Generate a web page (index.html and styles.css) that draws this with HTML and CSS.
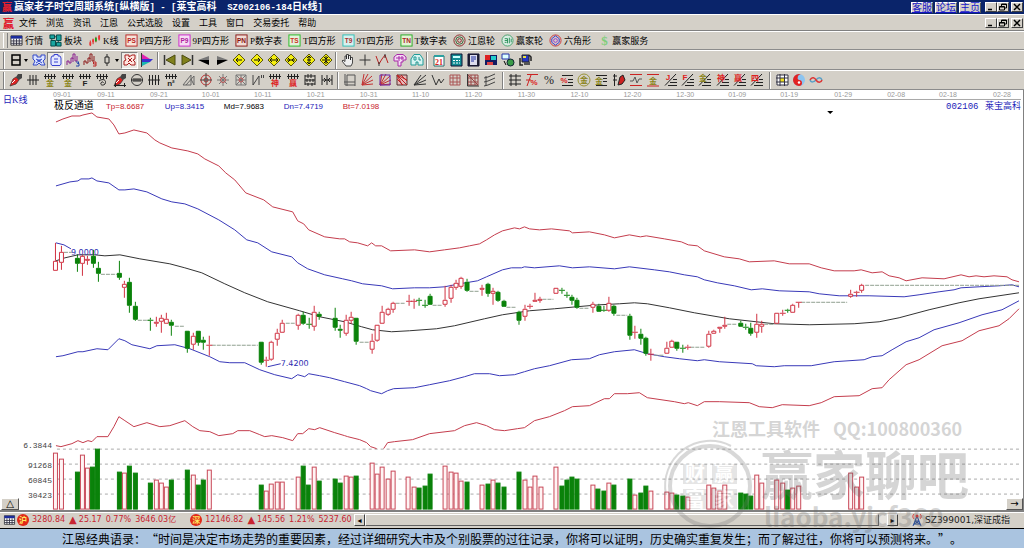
FILE: index.html
```html
<!DOCTYPE html>
<html lang="zh-CN">
<head>
<meta charset="utf-8">
<title>赢家老子时空周期系统</title>
<link rel="stylesheet" href="styles.css">
</head>
<body>
<svg class="sprite" aria-hidden="true">
  <defs>
    <symbol id="comb" viewBox="0 0 14 14"><path d="M1 3.500H13M2.500 1V6M5.500 1V6M8.500 1V6M11.500 1V6" stroke="#222" fill="none"/></symbol>
    <symbol id="diamond" viewBox="0 0 14 14"><path d="M7 1L13 7L7 13L1 7Z" fill="#f4ee10" stroke="#5a5610"/></symbol>
    <symbol id="steps" viewBox="0 0 14 14"><path d="M1 12.500L12 1M4 12.500H13M6 9.500H13M9 6.500H13" stroke="#222" fill="none"/></symbol>
    <symbol id="rays" viewBox="0 0 14 14"><path d="M2 12L4 1M2 12L8 1M2 12L12 3M2 12L13 7M2 12L13 11" stroke="#c23030" fill="none"/></symbol>
    <symbol id="pen" viewBox="0 0 14 14"><path d="M1 13L4 6L7 4L10 7L7 11Z" fill="#d22" stroke="#333" stroke-width=".7"/><path d="M7 4L9 1L13 1V5L10 7Z" fill="#444"/><path d="M3 10L6 7" stroke="#fff"/></symbol>
    <symbol id="min" viewBox="0 0 10 8"><path d="M2 6.500H6" stroke="#000" stroke-width="1.500"/></symbol>
    <symbol id="restore" viewBox="0 0 10 8"><path d="M3.500 3V1H8.500V5H7M1.500 3.500H6.500V7H1.500ZM1.500 4H6.500M3.500 1.500H8.500" stroke="#000" fill="none"/></symbol>
    <symbol id="close" viewBox="0 0 10 8"><path d="M2 1L8 7M8 1L2 7" stroke="#000" stroke-width="1.500"/></symbol>
    <symbol id="table" viewBox="0 0 14 14"><path d="M1 2H13V12H1Z" fill="#fff" stroke="#333"/><path d="M1 2H13V5H1Z" fill="#1c2c9c"/><path d="M1 7.500H13M1 10H13M4 5V12M7 5V12M10 5V12" stroke="#334" fill="none"/></symbol>
  </defs>
</svg>

<div class="app">
  <header class="titlebar">
    <span class="logo">赢</span>
    <h1 class="title">赢家老子时空周期系统<span>[</span>纵横版<span>] - [</span>莱宝高科<span>&nbsp; SZ002106-184</span>日<span>K</span>线<span>]</span></h1>
    <nav class="quick"><a href="#service">客服</a><a href="#forum">论坛</a><a href="#home">主页</a></nav>
    <div class="winbtns">
      <button aria-label="最小化"><svg><use href="#min"/></svg></button><button aria-label="还原"><svg><use href="#restore"/></svg></button><button class="last" aria-label="关闭"><svg><use href="#close"/></svg></button>
    </div>
  </header>

  <div class="menubar">
    <span class="logo">赢</span>
    <nav class="menus">
      <button>文件</button><button>浏览</button><button>资讯</button><button>江恩</button><button>公式选股</button><button>设置</button><button>工具</button><button>窗口</button><button>交易委托</button><button>帮助</button>
    </nav>
    <div class="winbtns">
      <button aria-label="子窗口最小化"><svg><use href="#min"/></svg></button><button aria-label="子窗口还原"><svg><use href="#restore"/></svg></button><button class="last" aria-label="子窗口关闭"><svg><use href="#close"/></svg></button>
    </div>
  </div>

  <div class="toolbar modules">
    <button><svg viewBox="0 0 14 14"><use href="#table"/></svg>行情</button>
    <button><svg viewBox="0 0 14 14"><g stroke="#044" fill="#19a5a0"><path d="M1 1H6V5H1ZM8 1H13V7H8ZM2 7H7V13H2ZM8 9H13V13H8Z"/><path d="M3 5V7M10 7V9M6 3H8" fill="none"/></g></svg>板块</button>
    <button><svg viewBox="0 0 14 14"><path d="M2.500 7V13M5.500 5V11M8.500 3V9M12 1V7" stroke="#c22"/><path d="M1.500 9H3.500V12H1.500ZM11 2H13V6H11ZM4.500 6H6.500V9H4.500Z" fill="#e33"/><path d="M7.500 4H9.500V8H7.500Z" fill="#19a019"/></svg>K线</button>
    <button><svg viewBox="0 0 14 14"><rect x="1" y="1" width="12" height="12" fill="#f6e4da" stroke="#b22"/><text x="7" y="10" class="tag" fill="#b22">PS</text></svg>P四方形</button>
    <button><svg viewBox="0 0 14 14"><rect x="1" y="1" width="12" height="12" fill="#f6dcf4" stroke="#c2c"/><text x="7" y="10" class="tag" fill="#b0209c">P9</text></svg>9P四方形</button>
    <button><svg viewBox="0 0 14 14"><rect x="1" y="1" width="12" height="12" fill="#f1ddd5" stroke="#811"/><text x="7" y="10" class="tag" fill="#811">PN</text></svg>P数字表</button>
    <button><svg viewBox="0 0 14 14"><rect x="1" y="1" width="12" height="12" fill="#e4f2dd" stroke="#2b2"/><text x="7" y="10" class="tag" fill="#c32">TS</text></svg>T四方形</button>
    <button><svg viewBox="0 0 14 14"><rect x="1" y="1" width="12" height="12" fill="#d8f0ee" stroke="#2cc0b8"/><text x="7" y="10" class="tag" fill="#a33">T9</text></svg>9T四方形</button>
    <button><svg viewBox="0 0 14 14"><rect x="1" y="1" width="12" height="12" fill="#e4f2d5" stroke="#2a2"/><text x="7" y="10" class="tag" fill="#a22">TN</text></svg>T数字表</button>
    <button><svg viewBox="0 0 14 14"><g fill="none"><circle cx="7" cy="7" r="6" stroke="#822"/><circle cx="7" cy="7" r="4" stroke="#363"/><circle cx="7" cy="7" r="2" stroke="#822"/></g></svg>江恩轮</button>
    <button><svg viewBox="0 0 14 14"><circle cx="7" cy="7" r="6" fill="#d8ece2" stroke="#47a06c"/><path d="M4 5H7V10M4 7H7M4 9L6 9M9 4V10M11 5V9" stroke="#289058" fill="none"/></svg>赢家轮</button>
    <button><svg viewBox="0 0 14 14"><g fill="none"><circle cx="7" cy="7" r="6" stroke="#c33"/><path d="M3 5L7 2L11 5V9L7 12L3 9Z" stroke="#33c"/><circle cx="7" cy="7" r="2" stroke="#93c"/></g></svg>六角形</button>
    <button><svg viewBox="0 0 14 14"><text x="8" y="12" text-anchor="middle" font-size="14" font-weight="700" fill="#7fce7a">$</text></svg>赢家服务</button>
  </div>

  <div class="toolbar">
    <div class="group period">
      <button class="drop" aria-label="日线"><svg viewBox="0 0 14 14"><path d="M3 2H11V12H3ZM3 7H11" fill="none" stroke="#000" stroke-width="1.500"/></svg><i></i></button>
      <button aria-label="叠加"><svg viewBox="0 0 14 14"><path d="M1 2H5V4H9V2H13V6L11 8L13 12H9L7 10L5 12H1L3 8L1 6ZM4 6L10 10M10 6L4 10M5 7H9" fill="#dce4ff" stroke="#3348c8"/></svg></button>
      <button class="pressed" aria-label="除权"><svg viewBox="0 0 14 14"><path d="M3 3H5V1.500H9V3H11L12 5V11L11 12.500H3L2 11V5ZM5 6H9M5 9H9" fill="#e4e8ff" stroke="#3a44d0"/></svg></button>
      <button aria-label="三段"><svg viewBox="0 0 14 14"><path d="M1 12V8H3V10H5V5H7V9M7 6V1H9V8H11V3" fill="none" stroke="#8a2090"/><path d="M10 9H13L11.500 10.500H13V13H10" fill="none" stroke="#24a"/></svg></button>
      <button aria-label="九段"><svg viewBox="0 0 14 14"><path d="M1 12V8H3V10H5V5H7V9M7 6V1H9V8H11V3" fill="none" stroke="#8c1c1c"/><path d="M13 11H10.500V9H13V13H10" fill="none" stroke="#b22"/></svg></button>
      <button class="drop" aria-label="K线样式"><svg viewBox="0 0 14 14"><path d="M5 4H9V10H5ZM7 1V4M7 10V13" fill="none" stroke="#222"/></svg><i></i></button>
      <button class="pressed" aria-label="自动分析"><svg viewBox="0 0 14 14"><path d="M2 2H6V4L9 2H12V6L10 7L12 9V12H8L6 10L4 12H1V8L3 7L2 5ZM5 5L9 9M9 5L5 9" fill="#ffe6e0" stroke="#a81c1c"/></svg></button>
      <button aria-label="分布"><svg viewBox="0 0 14 14"><path d="M2 1L10 6H2Z" fill="#e020b0"/><path d="M2 6H13L10 9H2Z" fill="#3a30d0"/><path d="M2 9H10L2 13Z" fill="#18b8b0"/><path d="M1.500 0V14" stroke="#333"/></svg></button>
    </div>
    <div class="group moves">
      <button aria-label="首个"><svg viewBox="0 0 14 14"><path d="M1.500 2V12" stroke="#333" stroke-width="1.500"/><path d="M12 2V12L3 7Z" fill="#80801c" stroke="#4a4a10"/></svg></button>
      <button aria-label="末个"><svg viewBox="0 0 14 14"><path d="M12.500 2V12" stroke="#333" stroke-width="1.500"/><path d="M2 2V12L11 7Z" fill="#80801c" stroke="#4a4a10"/></svg></button>
      <button aria-label="向左"><svg viewBox="0 0 14 14"><path d="M1 7L12 3V7Z" fill="#777"/><path d="M1 7H12V12Z" fill="#000"/></svg></button>
      <button aria-label="向右"><svg viewBox="0 0 14 14"><path d="M13 7L2 3V7Z" fill="#777"/><path d="M13 7H2V12Z" fill="#000"/></svg></button>
      <button aria-label="左移"><svg viewBox="0 0 14 14"><use href="#diamond"/><path d="M4 7H10M6 5L4 7L6 9" stroke="#111" fill="none"/></svg></button>
      <button aria-label="右移"><svg viewBox="0 0 14 14"><use href="#diamond"/><path d="M4 7H10M8 5L10 7L8 9" stroke="#111" fill="none"/></svg></button>
      <button aria-label="横向拉伸"><svg viewBox="0 0 14 14"><use href="#diamond"/><path d="M3 7H11M5 5L3 7L5 9M9 5L11 7L9 9" stroke="#111" fill="none"/></svg></button>
      <button aria-label="横向压缩"><svg viewBox="0 0 14 14"><use href="#diamond"/><path d="M3 7H11M4 5L6 7L4 9M10 5L8 7L10 9" stroke="#111" fill="none"/></svg></button>
      <button aria-label="纵向拉伸"><svg viewBox="0 0 14 14"><use href="#diamond"/><path d="M7 3V11M5 5L7 3L9 5M5 9L7 11L9 9M5 7H9" stroke="#111" fill="none"/></svg></button>
      <button aria-label="纵向压缩"><svg viewBox="0 0 14 14"><use href="#diamond"/><path d="M7 3V11M5 4L7 6L9 4M5 10L7 8L9 10M3 7H11" stroke="#111" fill="none"/></svg></button>
    </div>
    <div class="group cursors">
      <button aria-label="手形"><svg viewBox="0 0 14 14"><path d="M5 13L1 8L2 7L4 8.500V3H5.500V6V1.500H7.500V6V2.500H9.500V7V4.500H11.500V10L10 13Z" fill="#eee" stroke="#222" stroke-width=".8"/></svg></button>
      <button aria-label="十字"><svg viewBox="0 0 14 14"><path d="M7 1.500V12.500M1.500 7H12.500" stroke="#333"/></svg></button>
      <button aria-label="折线"><svg viewBox="0 0 14 14"><path d="M1 3L4 11L7 6L10 2L13 10" fill="none" stroke="#b22"/><path d="M4 9V13M10 1V5" stroke="#333"/></svg></button>
      <button aria-label="形态一"><svg viewBox="0 0 14 14"><path d="M1 4L4 1.500H10L13 4V7H10V9H8V13H5V8H1ZM3 5H11M6 3V8M9 3V7" fill="#f4dcf4" stroke="#a828a8"/></svg></button>
      <button aria-label="形态二"><svg viewBox="0 0 14 14"><path d="M1 6L4 1.500H10L13 6V12H8V9H6V12H1ZM4 4H6V7H4ZM9 4V7H11" fill="#d8f4f2" stroke="#209c98"/></svg></button>
    </div>
    <div class="group utils">
      <button aria-label="日历"><svg viewBox="0 0 14 14"><path d="M2 3H12V13H2Z" fill="#fff" stroke="#286c6c"/><path d="M2 2H12V4H2Z" fill="#2ca0a0"/><text x="7" y="11.500" text-anchor="middle" font-size="8" font-weight="700" fill="#d22">21</text></svg></button>
      <button aria-label="计算器"><svg viewBox="0 0 14 14"><path d="M2 1H13V13H2Z" fill="#138c94" stroke="#113"/><path d="M4 3H11V5H4Z" fill="#cff"/><path d="M4 7.500H11M4 10H11" stroke="#fff" stroke-dasharray="2 1"/></svg></button>
      <button aria-label="记事本"><svg viewBox="0 0 14 14"><path d="M2 1H13V13H2Z" fill="#223" stroke="#113"/><path d="M4 2H11V12H4Z" fill="#dde"/><path d="M5 4H10M5 6H10M5 8H8" stroke="#2030a0"/></svg></button>
      <button aria-label="保存"><svg viewBox="0 0 14 14"><path d="M1 2H13V12H1Z" fill="#111a60"/><path d="M1 2H6V7H1Z" fill="#d22"/><path d="M7 3H12V7H7Z" fill="#2cc"/><path d="M3 9H9V12H3Z" fill="#d44"/></svg></button>
      <button aria-label="同步"><svg viewBox="0 0 14 14"><path d="M1 1H8V6H1Z" fill="#dff" stroke="#23a"/><circle cx="9.500" cy="9.500" r="3.500" fill="#3a9a48" stroke="#123"/><path d="M3 8L5 12" stroke="#000"/></svg></button>
      <button aria-label="网络"><svg viewBox="0 0 14 14"><path d="M4 2H11V9H4Z" fill="#2838c0" stroke="#222"/><path d="M6 9H12V12H6Z" fill="#555"/><path d="M2 5V12H5M11 2L13 4V8" stroke="#222" fill="none" stroke-width="1.500"/><path d="M5 3H8V5H5Z" fill="#e8e040"/></svg></button>
    </div>
  </div>

  <div class="toolbar">
    <div class="group draw1">
      <button aria-label="画笔"><svg viewBox="0 0 14 14"><use href="#pen"/></svg></button>
      <button aria-label="刻度"><svg viewBox="0 0 14 14"><path d="M1 7H13M4 2V12M7 2V12M10 2V12" stroke="#222"/></svg></button>
      <button aria-label="金尺"><svg viewBox="0 0 14 14"><use href="#comb"/><text x="7" y="13" class="sub" fill="#8a8418">金</text></svg></button>
      <button aria-label="金尺二"><svg viewBox="0 0 14 14"><use href="#comb"/><text x="7" y="13" class="sub" fill="#8a8418">金</text></svg></button>
      <button aria-label="F尺"><svg viewBox="0 0 14 14"><use href="#comb"/><text x="7" y="13" class="sub" fill="#222">F</text></svg></button>
      <button aria-label="螺旋"><svg viewBox="0 0 14 14"><use href="#comb"/><path d="M4 8C8 5 12 7 10 11C8 13 5 12 6 10C7 8 9 9 8 10" fill="none" stroke="#222"/></svg></button>
      <button aria-label="笔尺"><svg viewBox="0 0 14 14"><use href="#pen"/><path d="M1 12.500H13M2.500 10V14M11.500 10V14" stroke="#222"/></svg></button>
      <button aria-label="圆尺"><svg viewBox="0 0 14 14"><circle cx="7" cy="7" r="5.500" fill="none" stroke="#333"/><path d="M1 7H13M4 5V9M6 5V9M8 5V9M10 5V9" stroke="#222"/></svg></button>
      <button aria-label="四刻度"><svg viewBox="0 0 14 14"><path d="M1 7H13M2.500 2V12M5.500 2V12M8.500 2V12M11.500 2V12" stroke="#222"/></svg></button>
      <button aria-label="平方尺"><svg viewBox="0 0 14 14"><use href="#comb"/><text x="7" y="13" class="sub" fill="#222">n²</text></svg></button>
      <button aria-label="角线"><svg viewBox="0 0 14 14"><path d="M1 12L9 2V12ZM4 12L12 3V12M9 6L12 12" fill="none" stroke="#666"/></svg></button>
      <button aria-label="红圆"><svg viewBox="0 0 14 14"><circle cx="7" cy="7" r="5" fill="none" stroke="#b33"/><circle cx="7" cy="7" r="2" fill="none" stroke="#b33"/><path d="M7 0V14M1 7H13" stroke="#444"/></svg></button>
      <button aria-label="星形"><svg viewBox="0 0 14 14"><path d="M7 1V13M1 7H13M3 3L11 11M11 3L3 11" stroke="#777"/><circle cx="7" cy="7" r="2.500" fill="none" stroke="#b55"/></svg></button>
      <button aria-label="方星"><svg viewBox="0 0 14 14"><path d="M2 2H12V12H2ZM7 2V12M2 7H12M2 2L12 12M12 2L2 12" fill="none" stroke="#777"/><circle cx="7" cy="7" r="2" fill="none" stroke="#b55"/></svg></button>
      <button aria-label="波段"><svg viewBox="0 0 14 14"><path d="M2 2V12M2 12L8 3V12M10.500 2V5M12.500 2V5" fill="none" stroke="#444"/></svg></button>
      <button aria-label="神尺"><svg viewBox="0 0 14 14"><use href="#comb"/><text x="7" y="13" class="sub" fill="#d22">神</text></svg></button>
      <button aria-label="赢尺"><svg viewBox="0 0 14 14"><use href="#comb"/><text x="7" y="13" class="sub" fill="#d22">赢</text></svg></button>
      <button aria-label="密尺"><svg viewBox="0 0 14 14"><path d="M2 2V12M12 2V12M2 3H12M2 7H12M2 11H12M5 1V5M8 1V5M4 6V9M7 6V9M10 6V9M5 10V13M9 10V13" fill="none" stroke="#222"/></svg></button>
      <button aria-label="间距"><svg viewBox="0 0 14 14"><path d="M2 2V12M7 2V12M12 2V12M2 7H12M4 5L6 7L4 9M10 5L8 7L10 9" fill="none" stroke="#222"/></svg></button>
    </div>
    <div class="group draw2">
      <button aria-label="框选"><svg viewBox="0 0 14 14"><path d="M4 2H12V9H4ZM2 1V12H12M12 9V13M1 9H4M4 9V13" fill="none" stroke="#555"/></svg></button>
      <button aria-label="扇形"><svg viewBox="0 0 14 14"><use href="#rays"/></svg></button>
      <button aria-label="扇形方框"><svg viewBox="0 0 14 14"><use href="#rays"/><path d="M2 2H12V12H2Z" fill="none" stroke="#62a"/></svg></button>
      <button aria-label="反扇形"><svg viewBox="0 0 14 14"><path d="M2 2H12V12H2Z" fill="#e8b8b8" stroke="#533"/><path d="M2 2L12 12M2 2L12 7M2 2L7 12M2 6L8 12M6 2L12 8" stroke="#b22"/></svg></button>
      <button aria-label="角度线"><svg viewBox="0 0 14 14"><path d="M1 12L13 2M1 12L13 7M1 12L13 11M1 12L8 2" stroke="#333"/></svg></button>
      <button aria-label="锯齿"><svg viewBox="0 0 14 14"><path d="M1 2L5 12L8 6L10 10L13 6" fill="none" stroke="#333"/></svg></button>
      <button aria-label="网格"><svg viewBox="0 0 14 14"><path d="M2 2H12V12H2ZM5 2V12M9 2V12M2 5H12M2 9H12" fill="none" stroke="#a55"/></svg></button>
      <button aria-label="网格线"><svg viewBox="0 0 14 14"><path d="M2 2H12V12H2ZM5 2V12M9 2V12M2 5H12M2 9H12M2 2L12 12" fill="none" stroke="#944"/><path d="M1.500 1V13H13" fill="none" stroke="#333"/></svg></button>
      <button aria-label="平行线"><svg viewBox="0 0 14 14"><path d="M1 5L5 4L12 1M1 9L5 8L12 5M1 13L5 12L12 9M3 3V13" fill="none" stroke="#444"/></svg></button>
    </div>
    <div class="group draw3">
      <button aria-label="档位"><svg viewBox="0 0 14 14"><path d="M3 1V13M8 1V13M1 3H13M1 7H13M1 11H13" fill="none" stroke="#222"/></svg></button>
      <button aria-label="红百分比"><svg viewBox="0 0 14 14"><path d="M2 1.500H13M2 13L6 2M1 7H6" stroke="#c22"/><text x="9" y="12" class="sub" fill="#d22">%</text></svg></button>
      <button aria-label="百分比"><svg viewBox="0 0 14 14"><text x="7" y="11" text-anchor="middle" font-size="12" fill="#222">%</text></svg></button>
      <button aria-label="百分比线"><svg viewBox="0 0 14 14"><path d="M2 2.500H13M8 6.500H13M8 9.500H13M2 12.500H13" stroke="#222"/><text x="4" y="10" class="sub" fill="#d22">%</text></svg></button>
      <button aria-label="金圆"><svg viewBox="0 0 14 14"><circle cx="7" cy="7" r="6" fill="none" stroke="#999338"/><text x="7" y="10" class="sub" fill="#8a8418">金</text></svg></button>
      <button aria-label="金线"><svg viewBox="0 0 14 14"><path d="M2 2.500H13M9 5.500H13M9 8.500H13M2 12.500H13" stroke="#222"/><text x="5" y="11" class="sub" fill="#8a8418">金</text></svg></button>
      <button aria-label="笔线"><svg viewBox="0 0 14 14"><path d="M2.500 1V13M1 3H5M1 7H5" stroke="#222"/><path d="M6 12L8 4L11 2L13 7L10 11Z" fill="#c22" stroke="#222"/></svg></button>
      <button aria-label="波线"><svg viewBox="0 0 14 14"><path d="M1 1.500H13M1 12.500H13" stroke="#c22"/><path d="M1 8L4 8L6 4L8 10L10 6H13" fill="none" stroke="#555"/></svg></button>
      <button aria-label="金平线"><svg viewBox="0 0 14 14"><path d="M1 1.500H13M1 13H13" stroke="#c22"/><text x="7" y="11" class="sub" fill="#8a8418">金</text></svg></button>
      <button aria-label="J线"><svg viewBox="0 0 14 14"><use href="#steps"/><text x="4" y="7" class="sub" fill="#d22">J</text></svg></button>
      <button aria-label="F线"><svg viewBox="0 0 14 14"><use href="#steps"/><text x="4" y="7" class="sub" fill="#d22">F</text></svg></button>
      <button aria-label="金阶"><svg viewBox="0 0 14 14"><use href="#steps"/><text x="5" y="8" class="sub" fill="#8a8418">金</text></svg></button>
      <button aria-label="神阶"><svg viewBox="0 0 14 14"><use href="#steps"/><text x="5" y="8" class="sub" fill="#d22">神</text></svg></button>
      <button aria-label="赢阶"><svg viewBox="0 0 14 14"><use href="#steps"/><text x="5" y="8" class="sub" fill="#d22">赢</text></svg></button>
      <button aria-label="四阶"><svg viewBox="0 0 14 14"><use href="#steps"/><text x="5" y="8" class="sub" fill="#d22">四</text></svg></button>
    </div>
    <div class="group draw4">
      <button aria-label="表格"><svg viewBox="0 0 14 14"><path d="M2 2H13V12H2Z" fill="#fff"/><path d="M5 5H10V9H5Z" fill="#f0e020"/><path d="M2 2H13V12H2ZM1 5H13M1 9H13M5 1V13M9.500 1V13" fill="none" stroke="#334"/></svg></button>
      <button aria-label="太极"><svg viewBox="0 0 14 14"><circle cx="7" cy="7" r="6" fill="#8cc4f0"/><path d="M7 1A6 6 0 0 0 7 13A3 3 0 0 0 7 7A3 3 0 0 1 9 1.500Z" fill="#e22222"/><circle cx="7" cy="9.500" r="1.200" fill="#fff"/></svg></button>
      <button aria-label="循环"><svg viewBox="0 0 14 14"><path d="M1 7C2 10 5 9 7 7C9 4 12 4 13 7" fill="none" stroke="#58a0c8" stroke-width="1.500"/><path d="M1 7C3 3 6 5 7 7C9 10 12 10 13 7" fill="none" stroke="#d33" stroke-width="1.500"/></svg></button>
    </div>
  </div>

  <main class="work">
    <svg class="chart" viewBox="0 90 1024 420" role="img" aria-label="莱宝高科日K线">
      <path class="axis" d="M54 99.500H1022"/>
      <g id="dates" class="date"></g>
      <text x="3" y="103" class="cn blue">日K线</text>
      <text x="54" y="109" class="cn name">极反通道</text>
      <text x="106" y="109" class="val red">Tp=8.6687</text>
      <text x="165" y="109" class="val blue">Up=8.3415</text>
      <text x="224" y="109" class="val">Md=7.9683</text>
      <text x="284" y="109" class="val blue">Dn=7.4719</text>
      <text x="343" y="109" class="val red">Bt=7.0198</text>
      <text x="947" y="109" class="code blue">002106</text>
      <text x="1022" y="109" class="cn blue end">莱宝高科</text>
      <path d="M828 111H834L831 114Z"/>
      <path class="grid" d="M57 449.500H1022M57 464.500H1022M57 479.500H1022M57 494.500H1022"/>
      <g class="scale"><text x="52" y="448">6.3844</text><text x="52" y="468">91268</text><text x="52" y="483">60845</text><text x="52" y="498">30423</text></g>
      <polyline class="line lred" points="56,122 63,119 72,116 80,116 83,115 92,113 97,117 109,119 114,125 119,134 125,133 134,130 147,133 155,140 160,143 172,148 188,151 198,154 205,159 219,166 226,173 235,180 246,193 264,200 273,207 293,212 298,221 304,224 309,230 325,237 340,239 345,239 350,242 358,243 368,246 372,243 376,246 382,246 391,251 415,250 430,252 445,250 460,248 470,246 480,244 487,240 495,235 503,231 515,228 520,229 525,227 530,229 540,230 552,229 570,231 573,233 590,232 605,235 615,238 630,235 641,237 647,236 665,239 682,242 689,245 698,246 705,251 725,257 740,259 750,262 775,261 790,264 810,264 822,268 835,271 855,271 862,270 873,273 883,272 890,276 900,278 907,281 923,278 945,279 962,275 970,277 977,276 985,277 995,276 1008,277 1013,280 1020,282"/>
      <polyline class="line lblue" points="56,186 70,182 78,181 81,179 89,179 92,178 97,181 109,183 119,190 125,190 134,189 147,192 162,199 172,202 185,204 198,209 219,220 235,230 247,240 258,243 272,252 292,257 298,263 308,269 325,275 343,279 352,281 363,284 382,286 393,289 415,288 430,288 445,287 460,284 478,281 487,277 503,270 512,268 522,268 525,267 535,268 560,266 573,268 590,267 615,269 630,267 655,270 670,272 685,275 698,277 705,280 718,283 735,286 752,290 763,289 780,291 810,292 820,294 840,296 870,296 905,297 920,295 940,292 955,290 962,288 980,287 1000,286 1013,285 1020,287"/>
      <polyline class="line" points="56,261 65,258 78,255 95,255 105,256 120,255 140,259 170,264 185,268 202,273 225,284 245,293 268,302 300,311 320,317 345,322 362,327 373,330 392,332 410,331 437,329 455,326 485,319 503,315 530,311 555,309 577,307 600,305 620,304 635,303 648,304 670,308 695,313 730,319 757,322 775,324 810,325 855,324 880,322 900,318 930,310 960,303 980,299 1000,296 1020,293"/>
      <polyline class="line lblue" points="56,357 63,356 78,352 83,352 97,349 108,350 119,339 125,341 132,345 150,349 157,346 175,345 190,349 210,357 220,362 230,363 245,363 260,370 275,375 292,379 298,375 305,377 309,374 320,376 330,378 345,382 360,386 367,389 371,391 382,394 388,391 394,389 415,388 430,385 450,381 465,377 475,374 490,374 500,376 515,375 525,372 535,369 550,366 572,360 590,359 600,355 615,352 635,350 648,354 665,357 680,359 698,361 705,360 720,362 753,364 757,366 775,367 785,366 812,366 835,362 865,360 873,357 883,356 893,350 907,342 920,338 935,330 960,323 983,315 1003,310 1020,301"/>
      <polyline class="line lred" points="56,446 61,447 72,444 78,441 83,443 88,441 92,442 97,437 108,437 114,427 119,417 125,421 134,427 147,423 160,427 170,426 185,421 193,427 200,431 210,432 219,436 233,434 238,431 250,431 260,435 265,437 272,436 283,438 293,441 298,434 303,434 309,429 315,430 320,428 335,433 345,436 348,437 360,440 367,443 371,447 377,449"/>
      <polyline class="line lred" points="384,449 388,443 395,442 413,440 430,434 455,431 465,426 477,423 487,426 495,430 505,431 518,429 525,428 535,421 550,417 565,411 573,407 590,406 605,399 610,399 615,394 628,394 640,393 648,398 675,402 685,404 689,403 698,406 705,402 720,402 750,403 760,407 773,408 783,405 810,406 822,403 835,397 860,396 873,389 883,388 890,380 907,365 920,360 943,346 963,341 980,331 1000,326 1010,319 1020,309"/>
      <path class="line lblue" d="M56 243L64 245L71 249M268 367L281 364"/>
      <text x="71" y="255" class="price">9.0000</text>
      <text x="281" y="366" class="price">7.4200</text>
      <g id="holidays" class="gaps"></g>
      <g id="candles"></g>
      <g id="volumes"></g>
    </svg>
    <button class="corner left" aria-label="展开">△</button>
    <button class="corner right" aria-label="下一页">→</button>
    <svg class="watermark" viewBox="0 0 320 120" aria-hidden="true">
      <text x="8" y="29" font-size="18" font-weight="700">江恩工具软件</text>
      <text x="129" y="29" font-size="18" font-weight="700">QQ:100800360</text>
      <g fill="none" stroke="#777"><circle cx="6" cy="79" r="40" stroke-width="4"/><path d="M-38 88A45 45 0 0 1 27 39" stroke-width="2"/></g>
      <path d="M-21 57H3V77H-21ZM8 57H33V77H8ZM-21 82H3V102H-21ZM8 82H33V102H8Z" opacity=".6"/>
      <g font-size="20" font-weight="700" class="seal"><text x="-19" y="74">财</text><text x="10" y="74">赢</text></g>
      <g font-size="20" font-weight="700" class="seal"><text x="-19" y="100">富</text><text x="10" y="100">家</text></g>
      <text x="57" y="88" font-size="52" font-weight="700">赢家聊吧</text>
      <text x="60" y="120" font-size="26" font-weight="700">liaoba.yjcf360</text>
    </svg>
  </main>

  <footer class="status">
    <svg class="tableicon" viewBox="0 0 14 14" aria-hidden="true"><use href="#table"/></svg>
    <div class="quotes">
      <b class="badge">沪</b><span class="num">3280.84</span><span class="up">▲</span><span class="num">25.17</span><span class="num">0.77%</span><span class="num amt">3646.03亿</span>
      <b class="badge">深</b><span class="num">12146.82</span><span class="up">▲</span><span class="num">145.56</span><span class="num">1.21%</span><span class="num">5237.60</span>
    </div>
    <div class="scroll"><button aria-label="向左滚动">◂</button><span class="thumb"></span><span class="track"></span><button aria-label="向右滚动">▸</button></div>
    <div class="symbol">
      <svg viewBox="0 0 12 14" aria-hidden="true"><path d="M6 3L2 13M6 3L10 13M4 8H8M3 11H9M4 8L9 11M8 8L3 11" stroke="#234a9c" fill="none"/><path d="M3 1C1 3 2 5 3 6M9 1C11 3 10 5 9 6" stroke="#d33" fill="none"/><circle cx="6" cy="3" r="1.500" fill="#d33"/></svg>
      SZ399001,深证成指
    </div>
  </footer>
  <p class="motto">江恩经典语录：“时间是决定市场走势的重要因素，经过详细研究大市及个别股票的过往记录，你将可以证明，历史确实重复发生；而了解过往，你将可以预测将来。”。</p>
</div>
<script src="chart.js"></script>
</body>
</html>
```
FILE: styles.css
```css
* { box-sizing: border-box; }
body { margin: 0; font: 9px/12px "Liberation Serif", "Noto Sans CJK SC", sans-serif; color: #000; background: #d4d0c8; }
button { font: inherit; color: inherit; background: none; border: 0; padding: 0; margin: 0; white-space: nowrap; }
.sprite { position: absolute; width: 0; height: 0; }
.app { display: flex; flex-direction: column; min-height: 100vh; }

.titlebar { display: flex; align-items: center; height: 14px; padding: 0 1px 0 2px; background: #0a246a; color: #fff; }
.logo { width: 12px; font: 900 10px/12px "Noto Sans CJK SC", sans-serif; color: #e02030; }
.title { flex: 1; margin: 0; font: 700 10px/13px "Noto Sans CJK SC", sans-serif; white-space: nowrap; }
.title span { font: 700 9px/13px "Liberation Mono", monospace; }
.quick { display: flex; gap: 2px; margin-right: 4px; }
.quick a { width: 22px; height: 11px; font: 10px/10px "Noto Sans CJK SC", sans-serif; text-align: center; color: #1414c8; background: #d4d0c8; border: 1px solid; border-color: #fff #555 #555 #fff; display: flex; align-items: center; justify-content: center; }
.winbtns { display: flex; }
.winbtns button { display: flex; align-items: center; justify-content: center; width: 12px; height: 10px; background: #d4d0c8; border: 1px solid; border-color: #fff #404040 #404040 #fff; }
.winbtns .last { margin-left: 2px; }
.winbtns svg { width: 10px; height: 8px; }

.menubar { display: flex; align-items: center; height: 17px; padding: 0 1px 0 3px; border-top: 1px solid #fff; border-bottom: 1px solid #808080; }
.menubar .logo { width: 16px; font-size: 11px; }
.menus { display: flex; flex: 1; gap: 9px; }

.toolbar { display: flex; align-items: center; height: 20px; padding-left: 3px; border-top: 1px solid #fff; border-bottom: 1px solid #8c8c8c; }
.toolbar svg { width: 14px; height: 14px; flex: none; display: block; }
.toolbar.modules { gap: 6px; height: 19px; }
.toolbar.modules svg { width: 13px; height: 13px; }
.modules::before { content: ""; width: 3px; height: 15px; margin-right: -4px; border-left: 1px solid #fff; border-right: 1px solid #808080; }
.modules button { display: flex; align-items: center; gap: 2px; }
.tag { font: 700 7px "Liberation Sans", sans-serif; text-anchor: middle; }
.sub { font: 700 8px "Liberation Sans", "Noto Sans CJK SC", sans-serif; text-anchor: middle; }
.group { display: grid; flex: none; align-items: center; height: 17px; padding-left: 3px; border-left: 1px solid #808080; box-shadow: inset 1px 0 #fff; }
.group button { display: flex; align-items: center; justify-content: center; height: 17px; }
.drop i { border: 2px solid transparent; border-top: 3px solid #000; border-bottom: 0; margin-left: 1px; }
.pressed { background: #ebe9e4; border: 1px solid; border-color: #808080 #fff #fff #808080; }
.period { width: 154px; grid-template-columns: 23px 17px 17px 17px 17px 23px 17px 17px; }
.moves { width: 178px; grid-template-columns: repeat(10, 1fr); }
.cursors { width: 91px; grid-template-columns: repeat(5, 1fr); }
.utils { width: 108px; grid-template-columns: repeat(6, 1fr); }
.draw1 { width: 333px; grid-template-columns: repeat(19, 1fr); }
.draw2 { width: 162px; margin-right: 3px; margin-left: 1px; grid-template-columns: repeat(9, 1fr); }
.draw3 { width: 264px; margin-right: 3px; grid-template-columns: repeat(15, 1fr); }
.draw4 { width: 56px; grid-template-columns: repeat(3, 1fr); }

.work { position: relative; flex: 1; display: flex; background: #fff; border-right: 1px solid #808080; border-bottom: 2px solid #808080; }
.chart { display: block; width: 100%; flex: 1; min-width: 0; }
.chart .axis { stroke: #a8a8a8; }
.date { font: 7px "Liberation Sans", sans-serif; fill: #999; text-anchor: middle; }
.cn { font: 9px "Liberation Serif", "Noto Sans CJK SC", sans-serif; }
.name { font-size: 10px; }
.val { font: 8px "Liberation Sans", sans-serif; }
.code { font: 9px "Liberation Mono", monospace; }
.price { font: 8px "DejaVu Sans", sans-serif; fill: #2a2ab0; }
.scale { font: 8px "Liberation Mono", monospace; fill: #444; text-anchor: end; }
.end { text-anchor: end; }
.blue { fill: #1c1cb8; }
.red { fill: #c81c2c; }
.grid { stroke: #aaa; stroke-dasharray: 3 3; }
.line { fill: none; stroke: #333; }
.lred { stroke: #c43c4c; }
.lblue { stroke: #3838b8; }
.gaps { stroke: #90a090; stroke-dasharray: 4 1; }
.rise { stroke: #d03040; fill: #fff; }
.fall { stroke: #0a820a; fill: #0a820a; }
.volrise { stroke: #c84858; fill: #fff4f4; }
.corner { position: absolute; bottom: 0; width: 17px; height: 12px; font: 10px/9px "DejaVu Sans", sans-serif; background: #d4d0c8; border: 1px solid; border-color: #fff #555 #555 #fff; }
.corner.left { left: 1px; width: 18px; }
.corner.right { right: 0; }
.watermark { position: absolute; right: -1px; bottom: -17px; width: 320px; height: 120px; overflow: visible; z-index: 1; opacity: .28; fill: #6a6a6a; font-family: "Noto Sans CJK SC", sans-serif; pointer-events: none; }
.seal { fill: #fff; }

.status { display: flex; align-items: center; height: 16px; border-top: 1px solid #fff; font: 8px/12px "DejaVu Sans", "Noto Sans CJK SC", sans-serif; color: #c82430; white-space: nowrap; }
.tableicon { width: 13px; height: 12px; margin: 0 1px 0 3px; flex: none; }
.quotes { display: flex; align-items: center; flex: 0 0 337px; overflow: hidden; }
.badge { flex: none; width: 12px; height: 12px; border-radius: 50%; background: #e02818; color: #ffe860; font: 700 8px/12px "Noto Sans CJK SC", sans-serif; text-align: center; margin-right: 3px; }
.num { margin-right: 4px; }
.up { font-size: 10px; margin-right: 2px; }
.num.amt { margin-right: 14px; }
.scroll { display: flex; flex: 0 1 544px; height: 12px; background: #e6e3de; }
.scroll button { width: 11px; background: #d4d0c8; border: 1px solid; border-color: #fff #404040 #404040 #fff; color: #000; font: 8px/9px "DejaVu Sans", sans-serif; flex: none; }
.thumb { flex: 1; background: #d4d0c8; border: 1px solid; border-color: #fff #606060 #606060 #fff; }
.track { width: 8px; }
.symbol { display: flex; align-items: center; gap: 2px; margin-left: 13px; color: #222; font-size: 9px; font-family: "DejaVu Sans", "Noto Sans CJK SC", sans-serif; }
.symbol svg { width: 12px; height: 14px; }

.motto { margin: 0; padding: 0 10px; height: 21px; border-top: 1px solid #000; background: #aac4e0; font: 12px/19px "Noto Sans CJK SC", sans-serif; text-spacing-trim: space-all; text-align: center; white-space: nowrap; }
```
FILE: chart.js
```js
const NS = "http://www.w3.org/2000/svg";

function add(parent, tag, attrs, text) {
  const el = document.createElementNS(NS, tag);
  for (const key in attrs) el.setAttribute(key, attrs[key]);
  if (text) el.textContent = text;
  document.getElementById(parent).appendChild(el);
}

// Trading calendar labels: [centre x, month-day]
[[62, "09-01"], [106, "09-11"], [159, "09-21"], [211, "10-01"], [263, "10-11"], [316, "10-21"],
 [369, "10-31"], [421, "11-10"], [474, "11-20"], [527, "11-30"], [580, "12-10"], [633, "12-20"],
 [686, "12-30"], [738, "01-09"], [790, "01-19"], [844, "01-29"], [897, "02-08"], [949, "02-18"], [1003, "02-28"]
].forEach(([x, label]) => add("dates", "text", { x, y: 97 }, label));

// Candles: x, high, body top, body bottom, low, rise (1) or fall (0)
const candles = [
  [55,243,261,271,271,1],[61,246,252,263,270,1],[77,255,258,264,272,0],[82,255,256,264,276,1],[87,256,259,261,265,1],
  [93,250,256,264,268,0],[98,262,268,274,282,0],[119,261,273,278,280,0],[124,281,284,288,298,1],[129,278,282,306,313,0],
  [135,302,306,320,321,0],[150,318,320,321,331,0],[156,317,322,324,327,1],[161,315,318,322,333,1],[166,313,319,324,324,1],
  [171,320,322,326,336,0],[187,331,331,349,353,0],[193,333,336,345,350,1],[198,331,331,343,346,0],[203,337,340,343,350,0],
  [209,336,345,346,356,1],[261,342,342,363,365,0],[266,357,360,361,367,1],[271,341,342,360,361,1],[277,329,333,340,346,1],
  [282,320,323,333,333,1],[298,314,315,326,330,1],[303,312,315,324,325,0],[309,318,324,325,329,0],[314,306,312,327,331,1],
  [319,312,314,317,320,0],[335,308,318,328,331,0],[340,325,329,331,338,0],[346,315,320,334,336,1],[351,312,317,321,324,1],
  [356,318,318,342,345,0],[372,334,341,350,354,1],[377,325,325,341,342,1],[382,306,312,324,324,1],[388,308,309,315,316,1],
  [393,302,303,310,313,1],[409,295,301,302,306,1],[414,299,301,302,309,1],[419,298,300,301,306,0],[425,300,305,306,308,0],
  [430,294,296,305,305,0],[445,286,300,305,307,1],[451,285,287,299,303,1],[456,280,283,288,290,1],[461,277,278,287,289,1],
  [467,279,282,291,292,0],[482,285,288,290,296,1],[488,283,284,294,297,0],[493,288,291,294,305,1],[498,291,292,301,302,0],
  [504,300,301,307,307,0],[519,311,312,321,325,0],[525,305,309,317,321,1],[530,304,306,307,309,1],[535,293,300,302,302,1],
  [540,297,299,301,303,1],[556,288,288,294,294,1],[562,288,290,291,294,0],[567,292,295,296,298,0],[572,295,297,301,305,0],
  [577,298,300,308,309,0],[593,302,304,308,313,1],[599,304,306,312,312,0],[604,306,310,311,312,0],[609,297,303,311,312,1],
  [614,305,306,314,316,0],[630,314,316,336,340,0],[635,326,332,333,339,1],[641,329,334,339,345,0],[646,337,338,354,356,0],
  [651,349,354,355,361,1],[667,342,348,354,354,1],[672,340,341,348,348,1],[677,342,342,349,351,0],[683,345,348,349,353,0],
  [688,345,347,348,350,1],[709,331,334,347,348,1],[714,330,331,334,334,1],[720,327,327,329,333,1],[725,317,325,327,329,1],
  [741,321,323,327,327,0],[746,324,327,328,330,0],[751,323,328,334,336,0],[757,314,324,333,338,1],[762,321,324,327,333,1],
  [777,313,313,324,324,1],[783,310,313,314,316,1],[788,309,310,311,313,0],[793,304,305,313,313,1],[799,302,302,303,308,1],
  [851,290,294,297,298,1],[857,291,292,293,297,1],[862,284,285,291,293,1]
];
for (const [x, high, top, bottom, low, rise] of candles) {
  const c = x + 0.5;
  const box = bottom - top > 1 ? `M${c - 2} ${top + 0.5}H${c + 2}V${bottom - 0.5}H${c - 2}Z` : `M${c - 3} ${top + 0.5}H${c + 3}`;
  add("candles", "path", { class: rise ? "rise" : "fall", d: `M${c} ${high}V${top}M${c} ${bottom}V${low}${box}` });
}

// Non-trading spans: x1, x2, y
[[101,117,274],[138,150,320],[175,185,326],[64,72,252],[212,258,345],[286,296,323],[360,370,342],[396,406,303],[433,443,305],
 [470,480,291],[507,517,307],[543,554,299],[580,590,308],[617,628,315],[655,665,355],[691,706,347],[728,738,324],
 [765,775,324],[802,848,302],[866,1021,285]
].forEach(([x1, x2, y]) => add("holidays", "path", { d: `M${x1} ${y + 0.5}H${x2}` }));

// Volume bars: x, top, rise (1) or fall (0)
[[55,453,1],[61,459,1],[77,472,0],[82,455,1],[87,468,1],[92,467,0],[97,449,0],[119,472,0],[124,473,1],[129,466,0],[135,473,0],
 [150,483,0],[156,480,1],[161,483,1],[166,487,1],[171,480,0],[187,470,0],[193,475,1],[198,485,0],[203,480,0],[209,470,1],
 [261,485,0],[266,491,1],[271,484,1],[277,482,1],[282,482,1],[298,477,1],[303,466,0],[308,485,0],[314,467,1],[319,481,0],
 [335,479,0],[340,483,0],[346,476,1],[351,477,1],[356,476,0],[372,463,1],[377,474,1],[382,467,1],[388,479,1],[393,471,1],
 [408,477,1],[414,487,1],[419,488,0],[425,486,0],[430,474,0],[445,466,1],[451,472,1],[456,473,1],[461,481,1],[467,482,0],
 [482,485,1],[488,484,0],[493,480,1],[498,483,0],[504,487,0],[519,472,0],[525,480,1],[530,487,1],[535,476,1],[541,487,1],
 [556,467,1],[562,486,0],[567,480,0],[572,477,0],[577,479,0],[593,485,1],[598,489,0],[604,491,0],[609,483,1],[614,485,0],
 [630,479,0],[635,495,1],[641,493,0],[646,486,0],[651,491,1],[667,492,1],[672,493,1],[677,495,0],[683,496,0],[688,497,1],
 [709,485,1],[714,488,1],[720,491,1],[725,485,1],[741,493,0],[746,494,0],[751,496,0],[757,475,1],[762,483,1],
 [777,480,1],[783,483,1],[788,490,0],[793,488,1],[799,486,1],[851,473,1],[857,487,1],[862,477,1]
].forEach(([x, top, rise]) => add("volumes", "rect", {
  class: rise ? "volrise" : "fall", x: x - 1.5, y: top + 0.5, width: 4, height: 509 - top
}));
```
